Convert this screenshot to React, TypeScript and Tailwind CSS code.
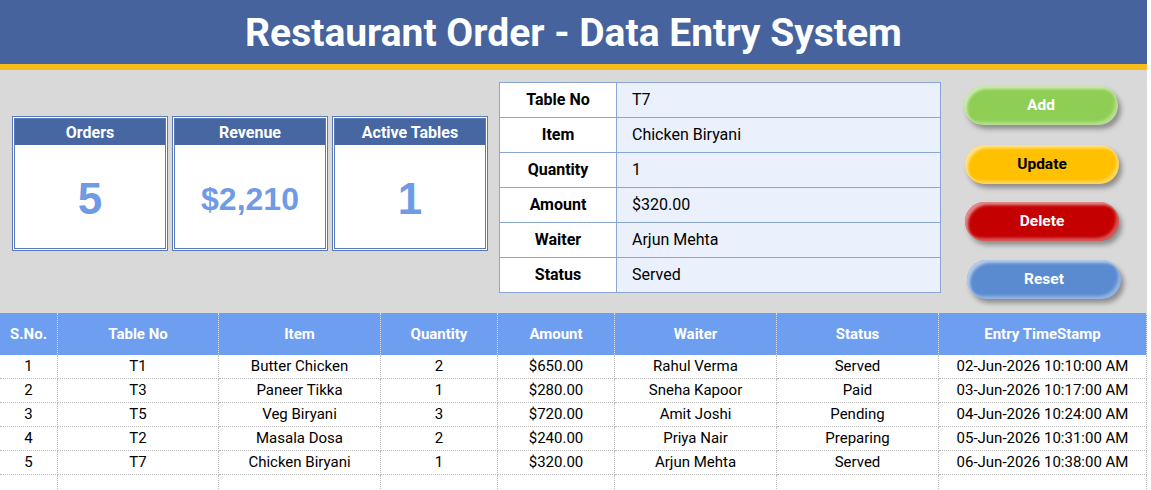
import React from "react";

type Order = {
  sno: number;
  table: string;
  item: string;
  qty: number;
  amount: string;
  waiter: string;
  status: string;
  stamp: string;
};

const orders: Order[] = [
  { sno: 1, table: "T1", item: "Butter Chicken", qty: 2, amount: "$650.00", waiter: "Rahul Verma", status: "Served", stamp: "02-Jun-2026 10:10:00 AM" },
  { sno: 2, table: "T3", item: "Paneer Tikka", qty: 1, amount: "$280.00", waiter: "Sneha Kapoor", status: "Paid", stamp: "03-Jun-2026 10:17:00 AM" },
  { sno: 3, table: "T5", item: "Veg Biryani", qty: 3, amount: "$720.00", waiter: "Amit Joshi", status: "Pending", stamp: "04-Jun-2026 10:24:00 AM" },
  { sno: 4, table: "T2", item: "Masala Dosa", qty: 2, amount: "$240.00", waiter: "Priya Nair", status: "Preparing", stamp: "05-Jun-2026 10:31:00 AM" },
  { sno: 5, table: "T7", item: "Chicken Biryani", qty: 1, amount: "$320.00", waiter: "Arjun Mehta", status: "Served", stamp: "06-Jun-2026 10:38:00 AM" },
];

const headers = ["S.No.", "Table No", "Item", "Quantity", "Amount", "Waiter", "Status", "Entry TimeStamp"];

const formRows: [string, string][] = [
  ["Table No", "T7"],
  ["Item", "Chicken Biryani"],
  ["Quantity", "1"],
  ["Amount", "$320.00"],
  ["Waiter", "Arjun Mehta"],
  ["Status", "Served"],
];

const gridCols = "grid grid-cols-[58px_161px_162px_117px_117px_162px_162px_208px]";

function KpiCard({ title, value, small }: { title: string; value: string; small?: boolean }) {
  return (
    <div className="flex h-[135px] w-[156px] flex-col border-[3px] border-double border-[#5a79b8] bg-white">
      <div className="flex h-[26px] items-center justify-center bg-[#4767a3] pt-[1px] text-[16px] font-bold text-white">
        {title}
      </div>
      <div
        className={`flex flex-1 items-center justify-center pt-[4px] font-['Liberation_Sans',Arial,sans-serif] font-bold text-[#6f9be6] ${
          small ? "text-[32px]" : "text-[44px]"
        }`}
      >
        {value}
      </div>
    </div>
  );
}

function PillButton({ label, color, textColor, className }: { label: string; color: string; textColor: string; className: string }) {
  return (
    <div
      className={`flex h-[39px] w-[154px] items-center justify-center rounded-full text-[15.5px] font-bold shadow-[inset_3px_3px_3px_rgba(255,255,255,0.55),inset_-3px_-3px_3px_rgba(255,255,255,0.35),3px_4px_5px_rgba(0,0,0,0.35)] ${color} ${textColor} ${className}`}
    >
      {label}
    </div>
  );
}

export default function App() {
  return (
    <div className="h-[490px] w-[1151px] overflow-hidden bg-white font-['Roboto','Noto_Sans',sans-serif] text-black">
      <div className="w-[1147px]">
        {/* Title band */}
        <div className="flex h-[64px] items-center justify-center bg-[#46639d] pt-[3px] text-[39px] font-bold text-white">
          Restaurant Order - Data Entry System
        </div>
        <div className="h-[6px] bg-[#f7bd1a]" />

        {/* Dashboard area */}
        <div className="flex h-[243px] bg-[#d9d9d9]">
          <div className="flex gap-[4px] pl-[12px] pt-[46px]">
            <KpiCard title="Orders" value="5" />
            <KpiCard title="Revenue" value="$2,210" small />
            <KpiCard title="Active Tables" value="1" />
          </div>

          <div className="ml-[11px] mt-[12px] self-start w-[442px] border border-[#8aa6d4]">
            {formRows.map(([label, value], i) => (
              <div
                key={label}
                className={`grid grid-cols-[117px_1fr] ${i < formRows.length - 1 ? "h-[35px] border-b border-[#8aa6d4]" : "h-[34px]"}`}
              >
                <div className="flex items-center justify-center border-r border-[#8aa6d4] bg-white text-[16px] font-bold">
                  {label}
                </div>
                <div className="flex items-center bg-[#eaf1fc] pl-[15px] text-[16px]">{value}</div>
              </div>
            ))}
          </div>

          <div className="ml-[23px] flex flex-col pt-[16px]">
            <PillButton label="Add" color="bg-[#8fce54]" textColor="text-white" className="" />
            <PillButton label="Update" color="bg-[#ffc000]" textColor="text-black" className="mt-[20px] ml-[1px] w-[151px]" />
            <PillButton label="Delete" color="bg-[#c40000]" textColor="text-white" className="mt-[18px] ml-[1px]" />
            <PillButton label="Reset" color="bg-[#5a8bd0]" textColor="text-white" className="mt-[19px] ml-[3px]" />
          </div>
        </div>

        {/* Orders table */}
        <div className={`${gridCols} h-[42px] bg-[#6e9ef0]`}>
          {headers.map((h) => (
            <div
              key={h}
              className="flex items-center justify-center border-r border-dotted border-[#d6e2f7] text-[15px] font-bold text-white"
            >
              {h}
            </div>
          ))}
        </div>
        {orders.map((o) => (
          <div key={o.sno} className={`${gridCols} h-[24px]`}>
            {[String(o.sno), o.table, o.item, String(o.qty), o.amount, o.waiter, o.status, o.stamp].map((v, j) => (
              <div
                key={j}
                className="flex items-center justify-center border-r border-b border-dotted border-[#bdbdbd] text-[15px]"
              >
                {v}
              </div>
            ))}
          </div>
        ))}
        <div className={`${gridCols} h-[24px]`}>
          {headers.map((h) => (
            <div key={h} className="border-r border-dotted border-[#bdbdbd]" />
          ))}
        </div>
      </div>
    </div>
  );
}
